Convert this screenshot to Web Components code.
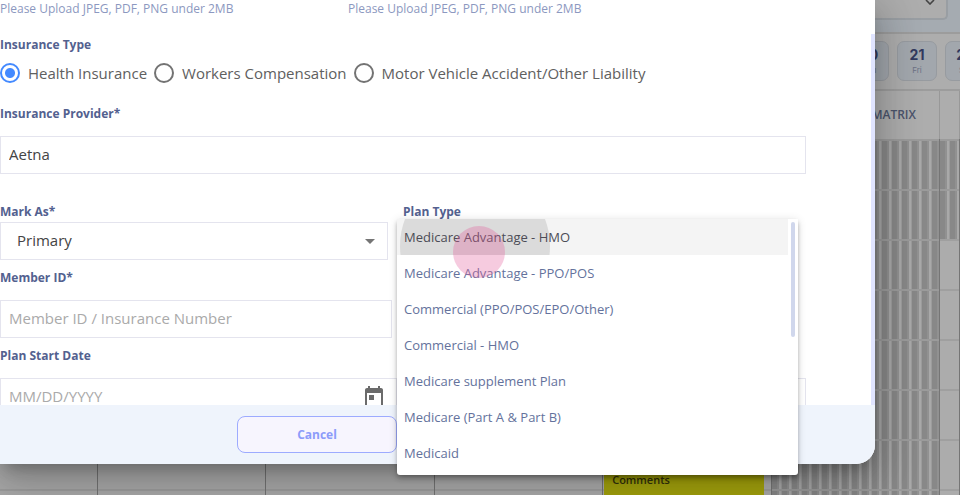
<!DOCTYPE html>
<html lang="en">
<head>
<meta charset="utf-8">
<title>Insurance details</title>
<style>
  html, body { height: 100%; margin: 0; }
  body { font-family: "Open Sans", "Noto Sans", sans-serif; overflow: hidden; }
</style>
</head>
<body>
<insurance-page></insurance-page>
<script>
function define(name, html, setup) {
  const template = document.createElement('template');
  template.innerHTML = html;
  customElements.define(name, class extends HTMLElement {
    constructor() {
      super();
      this.attachShadow({ mode: 'open' }).append(template.content.cloneNode(true));
    }
    connectedCallback() { if (setup) setup.call(this, this.shadowRoot); }
  });
}

/* One day in the schedule's date strip */
define('day-chip', `
<style>
  :host { display: block; flex: none; }
  button { box-sizing: border-box; width: 40px; height: 40px; padding: 0; border: 1px solid #979ba0;
    border-radius: 7px; background: #a2a7ad; color: #323a5f; font: 700 14px/18px Inter, sans-serif; }
  small { display: block; font: 400 8px/12px Inter, sans-serif; color: #6c7185; }
</style>
<button type="button"><slot></slot><small></small></button>`,
function (root) { root.querySelector('small').textContent = this.getAttribute('day'); });

/* Dimmed schedule behind the dialog */
define('schedule-board', `
<style>
  :host { display: flex; flex-direction: column; height: 100%; background: #adadad; overflow: hidden; }
  .tools { box-sizing: border-box; height: 34px; padding-right: 12px; background: #a5abb1;
    border-bottom: 2px solid #9c9c9c; display: flex; justify-content: flex-end; }
  .pick { box-sizing: border-box; width: 160px; height: 20px; padding: 0 11px 0 0; border: 2px solid #999ea3; border-top: 0;
    border-radius: 0 0 5px 5px; background: #adadad; display: flex; justify-content: flex-end; }
  .pick svg { flex: none; }
  .days { box-sizing: border-box; height: 57px; padding: 7px 0; border-bottom: 2px solid #9c9c9c;
    display: flex; gap: 8px; justify-content: flex-end; margin-right: -25px; }
  .cols { display: grid; grid-template-columns: 98px repeat(5, 1fr) 20px; }
  .cols > * { box-sizing: border-box; border-right: 1px solid #757575; }
  .heads { height: 48px; flex: none; }
  .heads > * { border-color: #989898; }
  .matrix { font: 600 12px/48px "Open Sans", sans-serif; color: #4b546c; text-align: right; padding-right: 23px; }
  .grid { flex: 1; }
  .grid > * { background: repeating-linear-gradient(#9f9f9f 0 2px, #acacac 2px 50px); }
  .grid > .busy, .half::before {
    background: repeating-linear-gradient(#9b9b9b 0 2px, #0000 2px 50px),
      repeating-linear-gradient(90deg, #888 0 5px, #919191 5px 7px, #a9a9a9 7px 9px, #9c9c9c 9px 10px); }
  .half::before { content: ""; display: block; height: 100px; }
  .note { display: flex; flex-direction: column; justify-content: flex-end; }
  .note p { margin: 0 7px 0 1px; height: 30px; padding: 5px 8px; box-sizing: border-box; background: #a3a20c; color: #33330d;
    font: 600 11px/20px "Open Sans", sans-serif; }
</style>
<div class="tools"><div class="pick"><svg width="10" height="5" viewBox="0 0 10 5" fill="none" stroke="#444" stroke-width="1.6"><path d="M1 0 5 4 9 0"/></svg></div></div>
<div class="days"><day-chip day="Thu">20</day-chip><day-chip day="Fri">21</day-chip><day-chip day="Sat">22</day-chip></div>
<div class="cols heads"><div></div><div></div><div></div><div></div><div></div><div class="matrix">MATRIX</div><div></div></div>
<div class="cols grid"><div></div><div></div><div></div><div></div><div class="note"><p>Comments</p></div><div class="busy"></div><div class="half"></div></div>`);

/* Radio button with its caption */
define('radio-choice', `
<style>
  :host { display: block; }
  label { display: flex; align-items: center; gap: 8px; font-size: 15px; line-height: 20px; color: #606060; white-space: nowrap; }
  input { appearance: none; box-sizing: border-box; flex: none; width: 20px; height: 20px; margin: 0; border: 2px solid #737373; border-radius: 50%; background: #fff; }
  input:checked { border-color: #448aff; background: radial-gradient(circle, #448aff 4.5px, #fff 5.5px); }
</style>
<label><input type="radio" name="type"><span><slot></slot></span></label>`,
function (root) { root.querySelector('input').checked = this.hasAttribute('checked'); });

/* Labelled field: text, select or date */
define('form-field', `
<style>
  :host { display: flex; flex-direction: column; justify-content: flex-end; gap: 14px; min-width: 0; }
  :host([kind="select"]) { gap: 2px; }
  label { font-size: 12px; line-height: 16px; font-weight: 700; color: #53618f; }
  label:empty { display: none; }
  .box { box-sizing: border-box; height: 38px; margin-bottom: -1px; border: 1px solid #e4e4ee; background: #fff; display: flex; align-items: center; }
  .box > * { font: 400 15px/22px "Open Sans", sans-serif; }
  input, select { appearance: none; flex: 1; min-width: 0; height: 100%; box-sizing: border-box; border: 0; outline: 0; background: none; padding: 0 8px 2px; color: #444; }
  select { padding-left: 16px; }
  input::placeholder { color: #aaa; opacity: 1; }
  button { border: 0; background: none; padding: 0; margin-right: 10px; height: 24px; }
  svg { display: block; flex: none; }
  .arrow { margin-right: 12px; }
</style>
<label for="control"></label><div class="box"></div>`,
function (root) {
  const kind = this.getAttribute('kind');
  const label = this.getAttribute('label') || '';
  root.querySelector('label').textContent = label;
  const box = root.querySelector('.box');
  if (kind === 'select') {
    box.innerHTML = '<select id="control"><option></option></select><svg class="arrow" width="10" height="5" viewBox="0 0 10 5"><path d="M0 0h10L5 5z" fill="#757575"/></svg>';
    box.querySelector('option').textContent = this.getAttribute('value') || '';
  } else {
    box.innerHTML = '<input id="control" type="text">';
    const input = box.firstChild;
    input.value = this.getAttribute('value') || '';
    input.placeholder = this.getAttribute('placeholder') || '';
    if (kind === 'date') box.insertAdjacentHTML('beforeend',
      '<button type="button" aria-label="Open calendar"><svg width="24" height="24" viewBox="0 0 24 24"><path fill="#6b6b6b" d="M19 3h-1V1h-2v2H8V1H6v2H5c-1.100 0-2 .9-2 2v15c0 1.100.9 2 2 2h14c1.100 0 2-.9 2-2V5c0-1.100-.9-2-2-2zm0 17H5V8h14zM7 10h5v5H7z"/></svg></button>');
  }
  if (!label) box.firstChild.setAttribute('aria-label', this.getAttribute('hint') || 'Value');
});

define('insurance-form', `
<style>
  :host { display: flex; flex: 1; min-height: 0; overflow: hidden; background: #fff; }
  form { flex: 1; min-width: 0; padding: 1px 65px 0 0; }
  .hints { display: grid; grid-template-columns: 348px 1fr; font-size: 12px; line-height: 16px; font-weight: 500; color: #8c98c0; }
  fieldset { border: 0; margin: 20px 0 23px; padding: 0; min-width: 0; }
  legend { padding: 0; margin-bottom: 10px; font-size: 12px; line-height: 16px; font-weight: 700; color: #53618f; }
  .choices { display: flex; gap: 7px; }
  .pair { display: grid; grid-template-columns: 1fr 1fr; margin-top: 11px; }
  .first { margin-top: 31px; }
  .first > * { margin-right: 15px; }
  .second > :first-child { margin-right: 11px; }
  .second > :last-child { margin-right: 8px; }
  .third > :first-child { margin-right: 6px; }
  .scroll { width: 4px; margin-top: 34px; background: #e0e4ff; }
</style>
<form>
  <div class="hints"><span>Please Upload JPEG, PDF, PNG under 2MB</span><span>Please Upload JPEG, PDF, PNG under 2MB</span></div>
  <fieldset>
    <legend>Insurance Type</legend>
    <div class="choices"><radio-choice checked>Health Insurance</radio-choice><radio-choice>Workers Compensation</radio-choice><radio-choice>Motor Vehicle Accident/Other Liability</radio-choice></div>
  </fieldset>
  <form-field label="Insurance Provider*" value="Aetna"></form-field>
  <div class="pair first"><form-field kind="select" label="Mark As*" value="Primary"></form-field><form-field kind="select" label="Plan Type"></form-field></div>
  <div class="pair second"><form-field label="Member ID*" placeholder="Member ID / Insurance Number"></form-field><form-field hint="Group number"></form-field></div>
  <div class="pair third"><form-field kind="date" label="Plan Start Date" placeholder="MM/DD/YYYY"></form-field><form-field hint="Plan end date"></form-field></div>
</form>
<div class="scroll"></div>`);

define('insurance-dialog', `
<style>
  :host { display: flex; flex-direction: column; overflow: hidden; border-radius: 0 0 19px 0; background: #fff;
    box-shadow: 0 10px 14px -6px rgba(0,0,0,.22), 0 18px 38px 4px rgba(0,0,0,.16), 0 8px 46px 8px rgba(0,0,0,.12); }
  footer { flex: none; padding: 11px 0; background: #eff4fc; display: grid; grid-template-columns: 237px 160px; }
  button { grid-column: 2; height: 37px; border: 1px solid #9dabff; border-radius: 8px; background: #f7f5fe;
    color: #8c9cfa; font: 700 12px/20px "Open Sans", sans-serif; }
</style>
<insurance-form></insurance-form>
<footer><button type="button">Cancel</button></footer>`);

define('plan-option', `
<style>
  :host { display: block; }
  button { display: block; width: 100%; height: 36px; padding: 0 7px; border: 0; background: none; text-align: left;
    font: 400 13px/36px "Open Sans", sans-serif; color: #64729c; position: relative; overflow: hidden; white-space: nowrap; }
  :host([active]) button { background: #f4f4f4; color: #4c4c56; }
  :host([active]) button::before { content: ""; position: absolute; left: 3px; top: -48px; width: 150px; height: 150px; border-radius: 50%; background: rgba(0,0,0,.1); }
  span { position: relative; }
</style>
<button type="button" role="option"><span><slot></slot></span></button>`);

/* Open list of plan types, with the press marker over it */
define('plan-list', `
<style>
  :host { display: flex; box-sizing: border-box; background: #fff; border-radius: 0 0 3px 3px;
    box-shadow: 0 2px 4px -1px rgba(0,0,0,.2), 0 4px 5px rgba(0,0,0,.14), 0 1px 10px rgba(0,0,0,.12); }
  .list { flex: 1; min-width: 0; }
  .thumb { width: 4px; height: 115px; margin: 3px 3px 0; border-radius: 2px; background: #d0d7ec; }
  .press { position: absolute; left: 56px; top: 7px; width: 52px; height: 52px; border-radius: 50%; background: rgba(226,93,157,.32); }
</style>
<div class="list" role="listbox" aria-label="Plan Type"><slot></slot></div>
<div class="thumb"></div>
<div class="press"></div>`);

define('insurance-page', `
<style>
  :host { display: block; position: relative; height: 100%; overflow: hidden; }
  insurance-dialog { position: absolute; inset: 0 85px 31px 0; }
  plan-list { position: absolute; left: 397px; top: 219px; right: 162px; bottom: 20px; }
</style>
<schedule-board></schedule-board>
<insurance-dialog></insurance-dialog>
<plan-list>
  <plan-option active>Medicare Advantage - HMO</plan-option>
  <plan-option>Medicare Advantage - PPO/POS</plan-option>
  <plan-option>Commercial (PPO/POS/EPO/Other)</plan-option>
  <plan-option>Commercial - HMO</plan-option>
  <plan-option>Medicare supplement Plan</plan-option>
  <plan-option>Medicare (Part A &amp; Part B)</plan-option>
  <plan-option>Medicaid</plan-option>
</plan-list>`);
</script>
</body>
</html>
